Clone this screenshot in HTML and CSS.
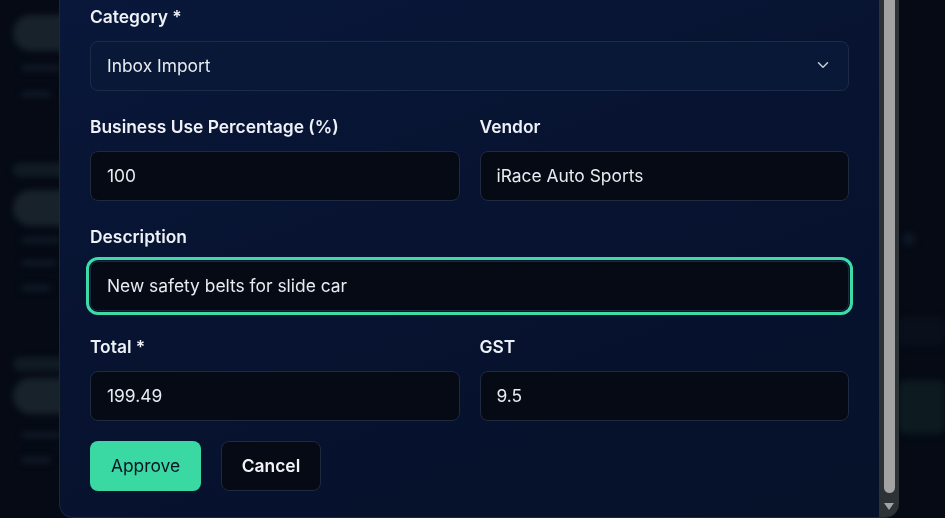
FILE: index.html
```html
<!DOCTYPE html>
<html lang="en">
<head>
<meta charset="utf-8">
<title>Review receipt</title>
<link rel="stylesheet" href="styles.css">
</head>
<body>
  <div class="page" aria-hidden="true">
    <div class="side side-left">
      <div class="blob pill"></div>
      <div class="blob line w40 m14"></div>
      <div class="blob line w30 m20"></div>

      <div class="blob faint m66"></div>
      <div class="blob pill m13"></div>
      <div class="blob line w40 m11"></div>
      <div class="blob line w36 m17"></div>
      <div class="blob line w30 m19"></div>

      <div class="blob faint m66"></div>
      <div class="blob pill m7"></div>
      <div class="blob line w40 m18"></div>
      <div class="blob line w30 m19"></div>
    </div>
    <div class="side side-right">
      <div class="blob dot"></div>
      <div class="blob band-faint"></div>
      <div class="blob band-teal"></div>
    </div>
  </div>

  <div class="overlay">
    <div class="modal">
      <form class="modal-body">
        <div class="field">
          <label class="label">Category *</label>
          <div class="select">
            <span>Inbox Import</span>
            <svg class="chevron" width="18" height="18" viewBox="0 0 24 24" fill="none" stroke="currentColor" stroke-width="2" stroke-linecap="round" stroke-linejoin="round"><path d="M6 9l6 6 6-6"/></svg>
          </div>
        </div>
        <div class="row">
          <div class="field">
            <label class="label">Business Use Percentage (%)</label>
            <div class="input">100</div>
          </div>
          <div class="field">
            <label class="label">Vendor</label>
            <div class="input">iRace Auto Sports</div>
          </div>
        </div>
        <div class="field">
          <label class="label">Description</label>
          <div class="input focused">New safety belts for slide car</div>
        </div>
        <div class="row">
          <div class="field">
            <label class="label">Total *</label>
            <div class="input">199.49</div>
          </div>
          <div class="field">
            <label class="label">GST</label>
            <div class="input">9.5</div>
          </div>
        </div>
        <div class="actions">
          <button type="button" class="btn btn-approve">Approve</button>
          <button type="button" class="btn btn-cancel">Cancel</button>
        </div>
      </form>
      <div class="scrollbar">
        <div class="thumb"></div>
        <svg class="arrow" width="10" height="8" viewBox="0 0 10 8"><path d="M0 0h10L5 7z" fill="#a3a3a3"/></svg>
      </div>
    </div>
  </div>
</body>
</html>
```
FILE: styles.css
```css
* { box-sizing: border-box; }

html, body {
  margin: 0;
  height: 100%;
  overflow: hidden;
}

body {
  background: #060b17;
  font-family: Inter, "Noto Sans", sans-serif;
  color: #e8ecf3;
}

/* background page (blurred behind the dialog) */
.page {
  display: flex;
  justify-content: space-between;
  height: 518px;
  filter: blur(3px);
}

.side-left {
  width: 80px;
  padding: 15px 0 0 13px;
  display: flex;
  flex-direction: column;
}

.blob { border-radius: 20px; flex: none; }

.pill {
  height: 36px;
  width: 80px;
  background: #2c3d44;
  opacity: 0.9;
}

.faint {
  height: 14px;
  width: 70px;
  background: #1c2b33;
}

.line {
  height: 6px;
  background: #1c2a3a;
  margin-left: 8px;
}
.w40 { width: 40px; }
.w36 { width: 36px; }
.w30 { width: 30px; }
.m7 { margin-top: 7px; }
.m11 { margin-top: 11px; }
.m13 { margin-top: 13px; }
.m14 { margin-top: 14px; }
.m17 { margin-top: 17px; }
.m18 { margin-top: 18px; }
.m19 { margin-top: 19px; }
.m20 { margin-top: 20px; }
.m66 { margin-top: 66px; }

.side-right {
  width: 47px;
  display: flex;
  flex-direction: column;
  padding-top: 232px;
}

.dot {
  width: 14px;
  height: 14px;
  background: #152235;
  margin-left: 4px;
}

.band-faint {
  margin-top: 70px;
  height: 30px;
  background: #0d1624;
  border-radius: 8px;
}

.band-teal {
  margin-top: 34px;
  height: 54px;
  background: #14292c;
  border-radius: 8px;
}

/* dialog */
.overlay {
  position: fixed;
  inset: 0;
  background: rgba(4, 8, 18, 0.45);
  padding-left: 59px;
}

.modal {
  width: 840px;
  height: 518px;
  display: flex;
  background: linear-gradient(160deg, #09173a 0%, #071330 45%, #06112a 100%);
  border: 1px solid #1b2742;
  border-top: none;
  border-right: none;
  border-radius: 0 0 14px 14px;
  overflow: hidden;
}

.modal-body {
  flex: 1;
  padding: 5px 30px 26px 30px;
  display: flex;
  flex-direction: column;
  gap: 24px;
}

.row {
  display: grid;
  grid-template-columns: 1fr 1fr;
  gap: 20px;
}

.field {
  display: flex;
  flex-direction: column;
}

.label {
  font-size: 17.4px;
  line-height: 24px;
  font-weight: 600;
  color: #eef1f6;
  margin-bottom: 12px;
}

.input, .select {
  height: 50px;
  border-radius: 8px;
  padding: 0 16px 2px;
  display: flex;
  align-items: center;
  font-size: 17.4px;
  color: #e8ebf0;
}

.input {
  background: #050a14;
  border: 1px solid #1e2a40;
}

.input.focused {
  outline: 3px solid #3ddba5;
  outline-offset: 1px;
}

.select {
  background: #0a1838;
  border: 1px solid #1d2b4a;
  justify-content: space-between;
}

.chevron {
  color: #c8ccd4;
}

.actions {
  margin-top: -4px;
  display: flex;
  gap: 20px;
}

.btn {
  height: 50px;
  border-radius: 8px;
  font-family: inherit;
  font-size: 17.4px;
  cursor: pointer;
  padding-bottom: 2px;
}

.btn-approve {
  width: 111px;
  background: #3ad8a3;
  border: none;
  color: #0b1424;
  font-weight: 400;
}

.btn-cancel {
  width: 100px;
  background: #050a14;
  border: 1px solid #1f2a40;
  color: #f2f4f7;
  font-weight: 600;
}

/* scrollbar column */
.scrollbar {
  width: 20px;
  background: #2c3235;
  display: flex;
  flex-direction: column;
  align-items: center;
  padding: 0 0 6px 0;
}

.thumb {
  width: 11px;
  height: 494px;
  background: #a3a3a3;
  border-radius: 0 0 6px 6px;
}

.arrow {
  margin-top: 10px;
}
```
